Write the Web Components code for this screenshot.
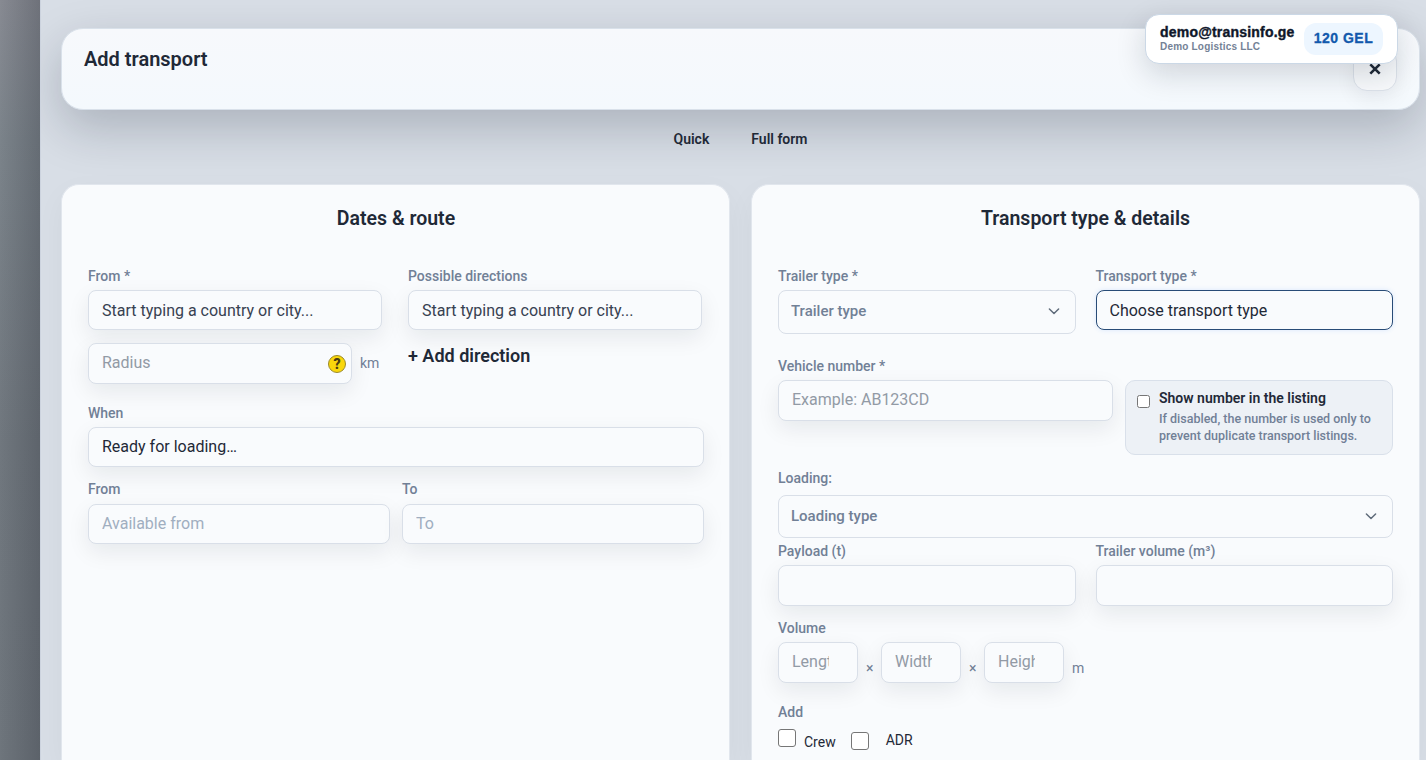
<!DOCTYPE html>
<html lang="en">
<head>
<meta charset="utf-8">
<title>Add transport</title>
<style>
  * { box-sizing: border-box; }
  html, body { height: 100%; }
  body {
    margin: 0;
    overflow: hidden;
    font-family: Roboto, "Liberation Sans", sans-serif;
    color: #1f2937;
    background: linear-gradient(90deg, rgba(40, 44, 54, 0) 0, rgba(40, 44, 54, .26) 40px),
                linear-gradient(180deg, #878a92 0, #7b838a 140px, #70777e 440px, #6e757c 100%);
  }
  .row { display: grid; }
  .two { grid-template-columns: 1fr 1fr; }
  .flex { display: flex; }
  .unit { font-size: 14px; line-height: 20px; padding-bottom: 2px; color: #718096; }
  .add-direction { font-size: 18px; line-height: 24px; font-weight: 600; margin-top: 14px; }
</style>
</head>
<body>
<transport-drawer>
  <drawer-header slot="header" heading="Add transport"></drawer-header>
  <mode-tabs slot="tabs"><span>Quick</span><span>Full form</span></mode-tabs>

  <form-card heading="Dates &amp; route" style="padding-right: 25px">
    <div class="row" style="grid-template-columns: 294px 294px; column-gap: 26px">
      <div>
        <form-field label="From *" value="Start typing a country or city..." style="--value-color: #374151; --lift: -2px"></form-field>
        <div class="flex" style="margin-top: 13px; gap: 8px; align-items: center">
          <form-field placeholder="Radius" style="width: 264px; --h: 41px; --lift: 2px"><help-badge></help-badge></form-field>
          <span class="unit">km</span>
        </div>
      </div>
      <div>
        <form-field label="Possible directions" value="Start typing a country or city..." style="--value-color: #374151; --lift: -2px"></form-field>
        <div class="add-direction">+ Add direction</div>
      </div>
    </div>
    <form-field label="When" value="Ready for loading…" style="margin-top: 19px"></form-field>
    <div class="row two" style="column-gap: 12px; margin-top: 12px">
      <form-field label="From" placeholder="Available from" style="--placeholder-color: #a0aec0; --label-gap: 5px"></form-field>
      <form-field label="To" placeholder="To" style="--placeholder-color: #a0aec0; --label-gap: 5px"></form-field>
    </div>
  </form-card>

  <form-card heading="Transport type &amp; details">
    <div class="row two" style="column-gap: 20px">
      <select-field label="Trailer type *" value="Trailer type" style="--h: 44px"></select-field>
      <form-field label="Transport type *" value="Choose transport type" style="--lift: -2px" active></form-field>
    </div>
    <div class="flex" style="gap: 12px; margin-top: 22px; align-items: flex-start">
      <form-field label="Vehicle number *" placeholder="Example: AB123CD" style="width: 335px; --h: 41px; --lift: 2px"></form-field>
      <check-note heading="Show number in the listing" style="margin-top: 24px; flex: 1">If disabled, the number is used only to prevent duplicate transport listings.</check-note>
    </div>
    <select-field label="Loading:" value="Loading type" style="margin-top: 13px; --h: 43px; --label-gap: 7px"></select-field>
    <div class="row two" style="column-gap: 20px; margin-top: 3px">
      <form-field label="Payload (t)" style="--h: 41px"></form-field>
      <form-field label="Trailer volume (m³)" style="--h: 41px"></form-field>
    </div>
    <size-fields label="Volume" style="margin-top: 12px"></size-fields>
    <extra-options label="Add" style="margin-top: 19px"></extra-options>
  </form-card>
</transport-drawer>
<account-chip email="demo@transinfo.ge" company="Demo Logistics LLC" balance="120 GEL"></account-chip>

<script>
  const labelCss = `
    .label {
      font-size: 14px;
      line-height: 20px;
      font-weight: 500;
      color: #718096;
      margin-bottom: var(--label-gap, 4px);
      white-space: nowrap;
    }
  `;

  const boxCss = `
    * { box-sizing: border-box; }
    :host { display: block; box-sizing: border-box; min-width: 0; }
    .box {
      height: var(--h, 40px);
      display: flex;
      align-items: center;
      padding: 0 13px;
      font-size: 16px;
      line-height: 20px;
      border: 1px solid #d9dfe8;
      border-radius: 8px;
      background: #f9fbfd;
      box-shadow: 0 8px 22px rgba(15, 23, 42, .08);
    }
    .text { flex: 1; min-width: 0; overflow: hidden; white-space: nowrap; }
  `;

  class BaseElement extends HTMLElement {
    constructor() {
      super();
      this.attachShadow({ mode: 'open' });
    }

    connectedCallback() {
      this.shadowRoot.innerHTML = this.template();
    }

    attr(name) {
      return this.getAttribute(name) || '';
    }

    labelMarkup() {
      const label = this.attr('label');
      return label ? `<div class="label">${label}</div>` : '';
    }
  }

  class TransportDrawer extends BaseElement {
    template() {
      return `
        <style>
          :host {
            display: flex;
            flex-direction: column;
            box-sizing: border-box;
            height: 100vh;
            margin-left: 40px;
            padding: 28px 6px 0 20px;
            overflow: hidden;
            border-left: 1px solid #ccd3de;
            background: #d8dee6;
          }
          .cards {
            display: grid;
            grid-template-columns: 669px 669px;
            column-gap: 21px;
            flex: 1;
          }
        </style>
        <slot name="header"></slot>
        <slot name="tabs"></slot>
        <div class="cards"><slot></slot></div>
      `;
    }
  }

  class DrawerHeader extends BaseElement {
    template() {
      return `
        <style>
          :host {
            display: flex;
            justify-content: space-between;
            flex: none;
            box-sizing: border-box;
            height: 82px;
            padding: 18px 22px;
            border: 1px solid #d9e1ea;
            border-radius: 22px;
            background: linear-gradient(180deg, #f7f9fc, #f4f9fd);
            box-shadow: 0 18px 48px rgba(15, 23, 42, .22);
          }
          h1 { margin: 0; font-size: 20px; line-height: 24px; font-weight: 600; }
          .close {
            align-self: flex-end;
            display: flex;
            align-items: center;
            justify-content: center;
            box-sizing: border-box;
            width: 44px;
            height: 44px;
            border: 1px solid #dce2ea;
            border-radius: 14px;
            background: #f8fafc;
            box-shadow: 0 8px 20px rgba(15, 23, 42, .06);
          }
        </style>
        <h1>${this.attr('heading')}</h1>
        <div class="close">
          <svg width="12" height="12" viewBox="0 0 12 12" fill="none" stroke="#1f2937" stroke-width="2.6" stroke-linecap="butt">
            <path d="M1.3 1.3 10.7 10.7M10.7 1.3 1.3 10.7"/>
          </svg>
        </div>
      `;
    }
  }

  class ModeTabs extends BaseElement {
    template() {
      return `
        <style>
          :host {
            display: flex;
            flex: none;
            justify-content: center;
            gap: 42px;
            height: 74px;
            padding-top: 19px;
            box-sizing: border-box;
            font-size: 14px;
            line-height: 20px;
            font-weight: 600;
          }
        </style>
        <slot></slot>
      `;
    }
  }

  class FormCard extends BaseElement {
    template() {
      return `
        <style>
          :host {
            display: block;
            box-sizing: border-box;
            min-width: 0;
            padding: 21px 26px 0;
            border: 1px solid #e1e6ed;
            border-bottom: 0;
            border-radius: 18px 18px 0 0;
            background: #f9fbfd;
            box-shadow: 0 10px 30px rgba(15, 23, 42, .04);
          }
          h2 {
            margin: 0 0 35px;
            font-size: 19.5px;
            line-height: 25px;
            font-weight: 600;
            text-align: center;
          }
        </style>
        <h2>${this.attr('heading')}</h2>
        <slot></slot>
      `;
    }
  }

  class FormField extends BaseElement {
    template() {
      const value = this.attr('value');
      return `
        <style>
          ${boxCss}
          ${labelCss}
          .text {
            color: var(--placeholder-color, #929aa5);
            margin-bottom: max(var(--lift, 0px), 0px);
            margin-top: max(0px - var(--lift, 0px), 0px);
          }
          .text.filled { color: var(--value-color, #1f2937); }
          :host([active]) .box {
            border-color: #294c77;
            box-shadow: 0 0 5px rgba(59, 130, 246, .16);
          }
          ::slotted(*) { margin-right: -8px; }
        </style>
        ${this.labelMarkup()}
        <div class="box">
          <span class="text ${value ? 'filled' : ''}">${value || this.attr('placeholder')}</span>
          <slot></slot>
        </div>
      `;
    }
  }

  class SelectField extends BaseElement {
    template() {
      return `
        <style>
          ${boxCss}
          ${labelCss}
          .box { padding: 0 14px 2px 12px; font-size: 15px; font-weight: 500; color: #718096; box-shadow: none; }
        </style>
        ${this.labelMarkup()}
        <div class="box">
          <span class="text">${this.attr('value')}</span>
          <svg width="14" height="14" viewBox="0 0 14 14" fill="none" stroke="#5f6b7a" stroke-width="1.5" stroke-linecap="round" stroke-linejoin="round">
            <path d="M2.4 5 7 9.5 11.6 5"/>
          </svg>
        </div>
      `;
    }
  }

  class HelpBadge extends BaseElement {
    template() {
      return `
        <style>
          :host {
            display: flex;
            flex: none;
            align-items: center;
            justify-content: center;
            box-sizing: border-box;
            width: 18px;
            height: 18px;
            border: 1px solid #9b8a2a;
            border-radius: 50%;
            background: #f9d70b;
            font-size: 14px;
            line-height: 16px;
            font-weight: 900;
            color: #4a3d12;
          }
        </style>
        ?
      `;
    }
  }

  class CheckNote extends BaseElement {
    template() {
      return `
        <style>
          * { box-sizing: border-box; }
          :host {
            display: flex;
            box-sizing: border-box;
            gap: 9px;
            height: 75px;
            padding: 8px 10px 0 11px;
            border: 1px solid #d9e0ea;
            border-radius: 10px;
            background: #edf1f6;
          }
          i {
            flex: none;
            width: 13px;
            height: 13px;
            margin-top: 6px;
            border: 1px solid #767676;
            border-radius: 2.5px;
            background: #fff;
          }
          strong { display: block; font-size: 14px; line-height: 19px; font-weight: 600; white-space: nowrap; }
          p { margin: 2px 0 0; font-size: 12.5px; line-height: 17px; font-weight: 500; color: #718096; }
        </style>
        <i></i>
        <div>
          <strong>${this.attr('heading')}</strong>
          <p><slot></slot></p>
        </div>
      `;
    }
  }

  class SizeFields extends BaseElement {
    template() {
      return `
        <style>
          :host { display: block; }
          ${labelCss}
          .sizes { display: flex; align-items: flex-start; gap: 8px; color: #718096; font-size: 14px; line-height: 20px; }
          form-field { width: 80px; --h: 41px; --lift: 2px; }
          b { width: 7px; margin-top: 16px; font-weight: 400; text-align: center; }
          b:last-child { width: auto; }
          /* room kept for the number spinner */
          i { display: block; width: 23px; flex: none; }
        </style>
        ${this.labelMarkup()}
        <div class="sizes">
          <form-field placeholder="Length"><i></i></form-field>
          <b>×</b>
          <form-field placeholder="Width"><i></i></form-field>
          <b>×</b>
          <form-field placeholder="Height"><i></i></form-field>
          <b>m</b>
        </div>
      `;
    }
  }

  class ExtraOptions extends BaseElement {
    template() {
      return `
        <style>
          :host { display: block; }
          ${labelCss}
          .options { display: flex; align-items: flex-start; padding-top: 3px; font-size: 14px; line-height: 20px; }
          i {
            box-sizing: border-box;
            width: 18px;
            height: 18px;
            border: 1px solid #767676;
            border-radius: 3px;
            background: #fff;
          }
        </style>
        ${this.labelMarkup()}
        <div class="options">
          <i></i>
          <span style="margin: 3px 15px 0 8px">Crew</span>
          <i style="margin-top: 3px"></i>
          <span style="margin: 1px 0 0 17px">ADR</span>
        </div>
      `;
    }
  }

  class AccountChip extends BaseElement {
    template() {
      return `
        <style>
          :host {
            position: absolute;
            top: 14px;
            right: 28px;
            display: flex;
            align-items: center;
            justify-content: space-between;
            box-sizing: border-box;
            width: 253px;
            height: 50px;
            padding: 0 14px;
            border: 1px solid #cbd8e6;
            border-radius: 14px;
            background: #fff;
            box-shadow: 0 10px 30px rgba(15, 23, 42, .16);
            font-family: "Liberation Sans", Arial, sans-serif;
            font-weight: 700;
            white-space: nowrap;
          }
          .who { padding-bottom: 2px; }
          .email { font-size: 14px; line-height: 16px; letter-spacing: .2px; color: #0f172a; -webkit-text-stroke: .4px #0f172a; }
          .company { font-size: 10px; line-height: 13px; letter-spacing: .2px; color: #748296; }
          .balance {
            display: flex;
            align-items: center;
            justify-content: center;
            box-sizing: border-box;
            width: 79px;
            height: 32px;
            padding-bottom: 2px;
            border-radius: 12px;
            background: #edf6ff;
            color: #1259ad;
            font-size: 14px;
            letter-spacing: .5px;
            -webkit-text-stroke: .3px #1259ad;
          }
        </style>
        <div class="who">
          <div class="email">${this.attr('email')}</div>
          <div class="company">${this.attr('company')}</div>
        </div>
        <div class="balance">${this.attr('balance')}</div>
      `;
    }
  }

  customElements.define('transport-drawer', TransportDrawer);
  customElements.define('drawer-header', DrawerHeader);
  customElements.define('mode-tabs', ModeTabs);
  customElements.define('form-card', FormCard);
  customElements.define('form-field', FormField);
  customElements.define('select-field', SelectField);
  customElements.define('help-badge', HelpBadge);
  customElements.define('check-note', CheckNote);
  customElements.define('size-fields', SizeFields);
  customElements.define('extra-options', ExtraOptions);
  customElements.define('account-chip', AccountChip);
</script>
</body>
</html>
